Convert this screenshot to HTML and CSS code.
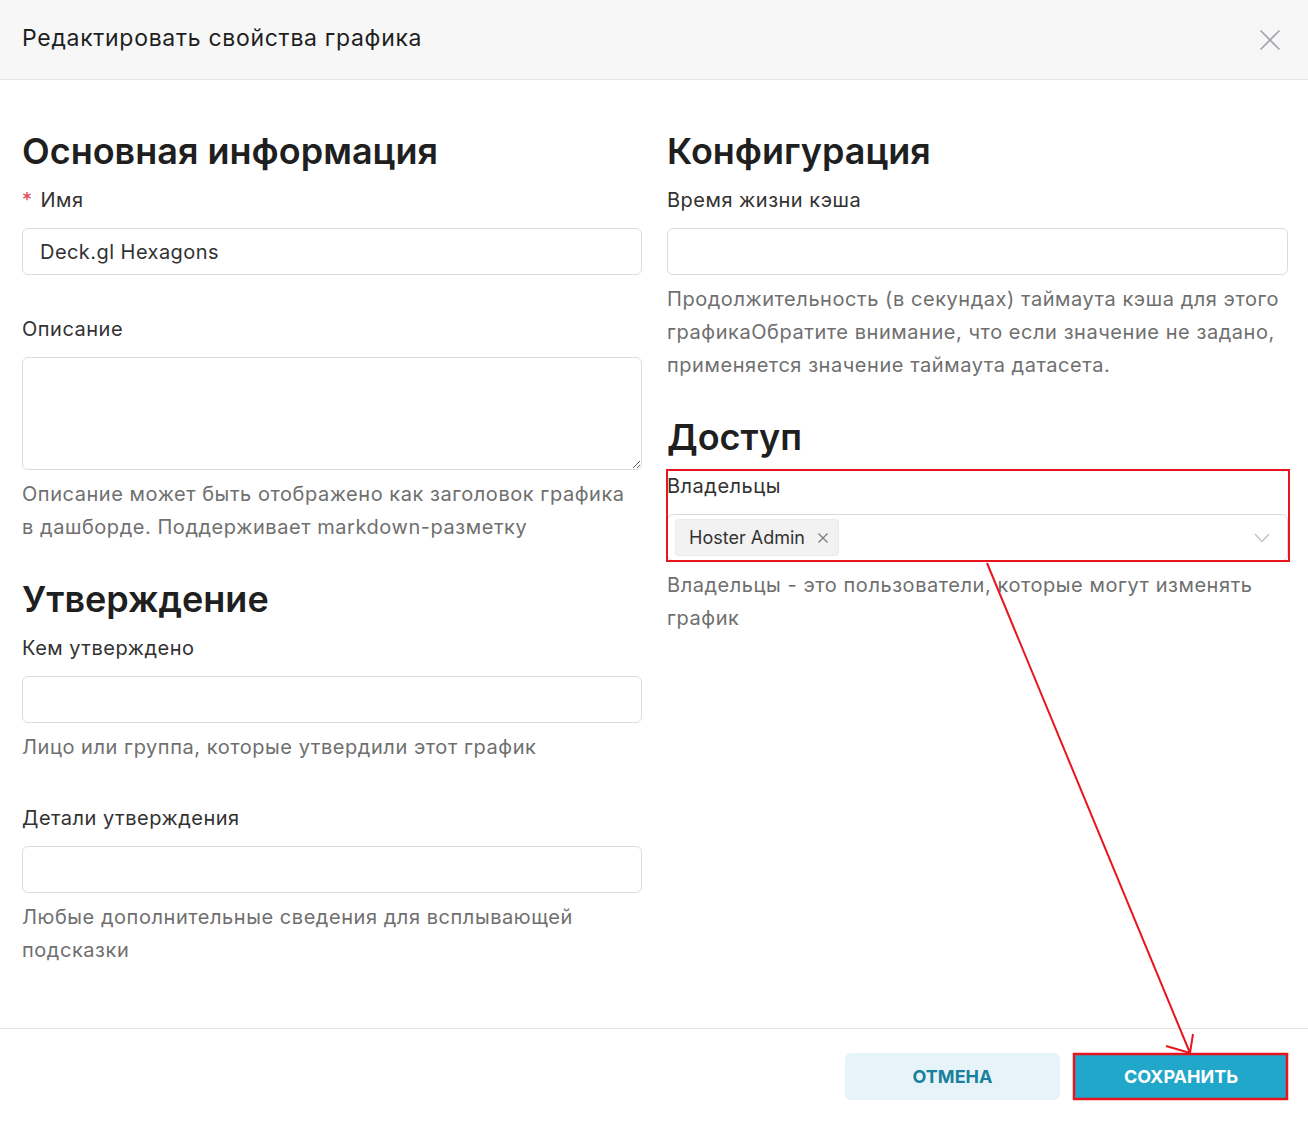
FILE: index.html
```html
<!DOCTYPE html>
<html lang="ru">
<head>
  <meta charset="UTF-8" />
  <title>Редактировать свойства графика</title>
  <link rel="stylesheet" href="styles.css">
</head>
<body>

  <div class="modal">
    <div class="modal-header">
      <div class="modal-title">Редактировать свойства графика</div>
      <span class="modal-close">
        <svg width="22" height="22" viewBox="0 0 22 22"><path d="M1.5 1.5 L20.5 20.5 M20.5 1.5 L1.5 20.5" stroke="#a3a3b3" stroke-width="1.6" fill="none"/></svg>
      </span>
    </div>

    <div class="modal-body">
      <!-- left column -->
      <div class="column">
        <h3 class="section-title">Основная информация</h3>
        <div class="field">
          <div class="field-label"><span class="required">*</span>Имя</div>
          <input class="text-input" type="text" value="Deck.gl Hexagons">
        </div>
        <div class="field">
          <div class="field-label">Описание</div>
          <textarea class="text-area"></textarea>
          <div class="field-help">Описание может быть отображено как заголовок графика в дашборде. Поддерживает markdown-разметку</div>
        </div>

        <h3 class="section-title">Утверждение</h3>
        <div class="field">
          <div class="field-label">Кем утверждено</div>
          <input class="text-input" type="text">
          <div class="field-help">Лицо или группа, которые утвердили этот график</div>
        </div>
        <div class="field">
          <div class="field-label">Детали утверждения</div>
          <input class="text-input" type="text">
          <div class="field-help">Любые дополнительные сведения для всплывающей подсказки</div>
        </div>
      </div>

      <!-- right column -->
      <div class="column">
        <h3 class="section-title">Конфигурация</h3>
        <div class="field">
          <div class="field-label">Время жизни кэша</div>
          <input class="text-input" type="text">
          <div class="field-help">Продолжительность (в секундах) таймаута кэша для этого графикаОбратите внимание, что если значение не задано, применяется значение таймаута датасета.</div>
        </div>

        <h3 class="section-title">Доступ</h3>
        <div class="field">
          <div class="field-label">Владельцы</div>
          <div class="select">
            <span class="tag">Hoster Admin
              <svg class="tag-close" width="12" height="12" viewBox="0 0 12 12"><path d="M1.5 1.5 L10.5 10.5 M10.5 1.5 L1.5 10.5" stroke="#7a7a7a" stroke-width="1.2" fill="none"/></svg>
            </span>
            <svg class="select-arrow" width="16" height="10" viewBox="0 0 16 10"><path d="M1 1 L8 8.5 L15 1" stroke="#bfbfbf" stroke-width="1.3" fill="none"/></svg>
          </div>
          <div class="field-help">Владельцы - это пользователи, которые могут изменять график</div>
        </div>
      </div>
    </div>

    <div class="modal-footer">
      <button class="btn btn-cancel">Отмена</button>
      <button class="btn btn-save">Сохранить</button>
    </div>
  </div>

  <!-- red annotation overlay -->
  <svg class="annotation" width="1308" height="1125" viewBox="0 0 1308 1125">
    <rect x="667" y="470" width="622" height="91" fill="none" stroke="#e8141e" stroke-width="2"/>
    <rect x="1074" y="1054" width="213" height="45" fill="none" stroke="#e8141e" stroke-width="2.5"/>
    <path d="M987 563 L1190 1053 M1166 1046 L1190 1053 L1193 1034" fill="none" stroke="#e8141e" stroke-width="2"/>
  </svg>

</body>
</html>
```

FILE: styles.css
```css
* {
  box-sizing: border-box;
}

body {
  margin: 0;
  background-color: #fff;
  font-family: Inter, "Noto Sans", sans-serif;
  color: #323232;
}

.modal {
  width: 1308px;
  height: 1125px;
  display: flex;
  flex-direction: column;
}

.modal-header {
  flex-shrink: 0;
  height: 80px;
  background-color: #f7f7f7;
  border-bottom: 1px solid #e6e6e6;
  display: flex;
  align-items: center;
  justify-content: space-between;
  padding: 0 27px 0 22px;
}

.modal-title {
  font-size: 23px;
  letter-spacing: 0.7px;
  color: #1f1f1f;
  margin-top: -3px;
}

.modal-close {
  display: flex;
}

.modal-body {
  flex: 1;
  min-height: 0;
  display: grid;
  grid-template-columns: 620px 621px;
  column-gap: 25px;
  padding: 56px 20px 0 22px;
}

.section-title {
  font-size: 36px;
  font-weight: 600;
  line-height: 30px;
  color: #1f1f1f;
  margin: 0 0 20px;
}

.field {
  margin-bottom: 40px;
}

.field-label {
  font-size: 20px;
  letter-spacing: 0.5px;
  line-height: 28px;
  margin-bottom: 14px;
  color: #323232;
}

.required {
  color: #e04355;
  margin-right: 8px;
}

.text-input,
.text-area,
.select {
  display: block;
  width: 100%;
  height: 47px;
  border: 1px solid #d9dbe3;
  border-radius: 6px;
  background: #fff;
  font-family: inherit;
  font-size: 20px;
  letter-spacing: 0.45px;
  color: #323232;
  padding: 0 17px;
  outline: none;
}

.text-area {
  height: 113px;
  resize: vertical;
  padding: 8px 17px;
}

.field-help {
  font-size: 20px;
  letter-spacing: 0.55px;
  line-height: 33px;
  color: #6f6f6f;
  margin-top: 8px;
}

.select {
  display: flex;
  align-items: center;
  justify-content: space-between;
  padding: 0 17px 0 7px;
}

.tag {
  display: inline-flex;
  align-items: center;
  height: 37px;
  padding: 0 9px 0 13px;
  background-color: #f2f2f2;
  border: 1px solid #ebebeb;
  border-radius: 3px;
  font-size: 18px;
  letter-spacing: 0;
  color: #323232;
}

.tag-close {
  margin-left: 12px;
}

.modal-footer {
  flex-shrink: 0;
  border-top: 1px solid #e3e3e3;
  display: flex;
  justify-content: flex-end;
  gap: 14px;
  padding: 24px 20px 25px;
}

.btn {
  height: 47px;
  width: 215px;
  border: none;
  border-radius: 6px;
  font-family: inherit;
  font-size: 18px;
  font-weight: 700;
  text-transform: uppercase;
  cursor: pointer;
}

.btn-cancel {
  background-color: #e6f4f9;
  color: #1a7f9c;
}

.btn-save {
  width: 214px;
  background-color: #20a7c9;
  color: #fff;
}

.annotation {
  position: absolute;
  top: 0;
  left: 0;
  pointer-events: none;
}
```
